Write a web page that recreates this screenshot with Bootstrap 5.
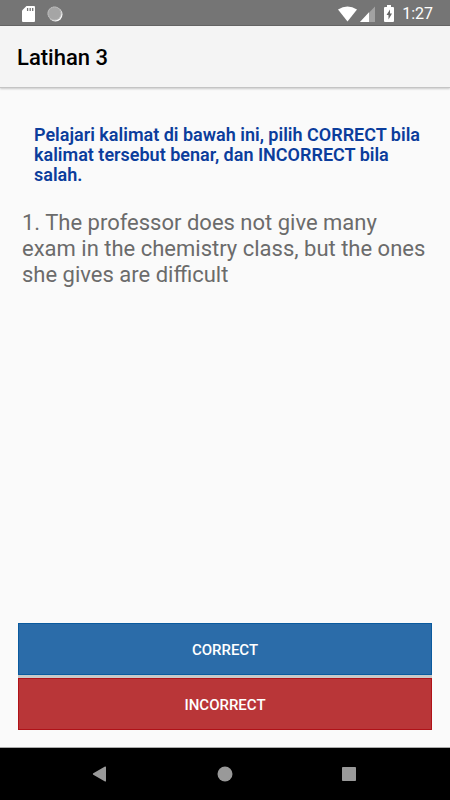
<!DOCTYPE html>
<html lang="id">
<head>
<meta charset="utf-8">
<meta name="viewport" content="width=device-width, initial-scale=1">
<title>Latihan 3</title>
<link href="https://cdn.jsdelivr.net/npm/bootstrap@5.3.0/dist/css/bootstrap.min.css" rel="stylesheet">
<style>
  body { font-family: Roboto, "Noto Sans", sans-serif; background: #fafafa; }
  .status-bar { height: 26px; padding: 2px 17px 0 22px; background: #757575; border-bottom: 1px solid #666; color: #fff; font-size: 16px; line-height: 24px; }
  .status-bar svg, .system-nav svg { display: block; }
  .app-bar { height: 62px; padding: 2px 17px 0; background: #f4f4f4; border-bottom: 1px solid #c4c4c4; box-shadow: 0 1px 2px rgba(0,0,0,.2); }
  .app-title { font-size: 22px; font-weight: 500; line-height: 26px; color: #000; }
  .lesson { padding: 37px 18px 17px; }
  .instruction { margin: 0 8px 25px 16px; font-size: 18px; font-weight: 600; line-height: 20px; color: #0b3d9c; }
  .question { margin: 0 4px; font-size: 22px; line-height: 26px; color: #6b6b6b; }
  .answer { height: 52px; padding: 2px 12px 0; border-radius: 0; border-width: 1px; font-size: 15px; font-weight: 500; }
  .answers { gap: 3px; background: #c8c8c8; }
  .answer-correct, .answer-correct:hover { background: #2b6ca9; border-color: #0a5a9e; color: #fff; }
  .answer-incorrect, .answer-incorrect:hover { background: #b93638; border-color: #b01218; color: #fff; }
  .system-nav { height: 53px; padding: 0 39px 0 37px; background: #000; border-top: 1px solid #aaa; }
  .nav-key { background: none; border: 0; }
</style>
<script src="https://cdn.jsdelivr.net/npm/bootstrap@5.3.0/dist/js/bootstrap.bundle.min.js"></script>
</head>
<body>
<div class="d-flex flex-column min-vh-100">
  <div class="status-bar d-flex align-items-center">
    <svg width="13" height="16" viewBox="0 0 13 16" aria-hidden="true"><path fill="#fff" d="M4.500 0H12a1 1 0 0 1 1 1v14a1 1 0 0 1-1 1H1a1 1 0 0 1-1-1V4.500z"/><path stroke="#757575" stroke-width="1.300" d="M5.600 2v3M8.200 2v3M10.700 2v3"/></svg>
    <svg class="ms-2 me-auto" width="24" height="16" viewBox="0 0 24 16" aria-hidden="true"><circle cx="12.500" cy="8.500" r="7" fill="#fff" fill-opacity=".95"/><circle cx="11.500" cy="7.500" r="7" fill="#a5a5a5"/><circle cx="11.500" cy="7.500" r="6.500" fill="none" stroke="#d0d0d0" stroke-dasharray="1 1"/></svg>
    <svg width="20" height="16" viewBox="0 0 20 16" aria-hidden="true"><path fill="#fff" d="M0 3.500Q9.500-2.500 19 3.500L9.500 15.500z"/></svg>
    <svg class="me-1" width="17" height="16" viewBox="0 0 17 16" aria-hidden="true"><path fill="#a2a2a2" d="M17 .500V16H2z"/><path fill="#fff" d="M11 6.200V16H2z"/></svg>
    <svg class="ms-1 me-2" width="11" height="17" viewBox="0 0 11 17" aria-hidden="true"><path fill="#fff" d="M4 0h4v2h2a1 1 0 0 1 1 1v13a1 1 0 0 1-1 1H2a1 1 0 0 1-1-1V3a1 1 0 0 1 1-1h2z"/><path fill="#666" d="M7 4.500 3.500 10h2v4.500L9 8.500H7z"/></svg>
    <span>1:27</span>
  </div>
  <header class="app-bar d-flex align-items-center">
    <h1 class="app-title mb-0">Latihan 3</h1>
  </header>
  <main class="lesson flex-grow-1 d-flex flex-column">
    <p class="instruction">Pelajari kalimat di bawah ini, pilih CORRECT bila kalimat tersebut benar, dan INCORRECT bila salah.</p>
    <p class="question">1. The professor does not give many exam in the chemistry class, but the ones she gives are difficult</p>
    <div class="answers d-grid mt-auto">
      <button type="button" class="btn answer answer-correct">CORRECT</button>
      <button type="button" class="btn answer answer-incorrect">INCORRECT</button>
    </div>
  </main>
  <nav class="system-nav d-flex" aria-label="System">
    <button type="button" class="nav-key flex-fill d-flex justify-content-center align-items-center" aria-label="Back"><svg width="15" height="16" viewBox="0 0 15 16"><path fill="#999" d="M13 .500a.8.800 0 0 1 1 .8v13.400a.8.800 0 0 1-1 .8L1.300 8.700a.8.800 0 0 1 0-1.400z"/></svg></button>
    <button type="button" class="nav-key flex-fill d-flex justify-content-center align-items-center" aria-label="Home"><svg width="16" height="16" viewBox="0 0 16 16"><circle cx="8" cy="8" r="7.500" fill="#999"/></svg></button>
    <button type="button" class="nav-key flex-fill d-flex justify-content-center align-items-center" aria-label="Recent apps"><svg width="14" height="14" viewBox="0 0 14 14"><rect width="14" height="14" rx=".8" fill="#999"/></svg></button>
  </nav>
</div>
</body>
</html>
